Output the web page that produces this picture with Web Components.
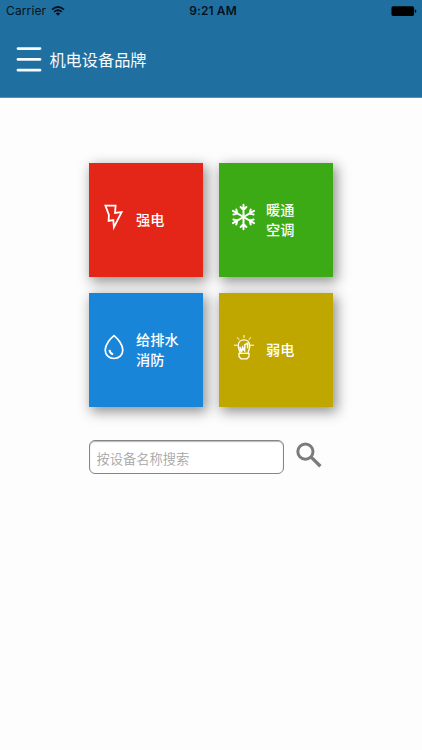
<!DOCTYPE html>
<html lang="zh-CN">
<head>
<meta charset="utf-8">
<title>机电设备品牌</title>
<style>
html,body{margin:0;height:100%;background:#fdfdfd}
body{font-family:Inter,"Noto Sans CJK SC",sans-serif;overflow:hidden}
</style>
</head>
<body>
<brand-page></brand-page>
<script>
const define = (name, html) => customElements.define(name, class extends HTMLElement {
  constructor() {
    super();
    this.attachShadow({ mode: 'open' }).innerHTML = html;
  }
});

// The six arms of the snowflake are one arm turned in steps of 60 degrees.
const flake = [0, 60, 120, 180, 240, 300].map(a =>
  `<path d="M12.5 13V.8M9.6 3l2.9 2.8L15.4 3" transform="rotate(${a} 12.5 13)"/>`).join('');

define('status-bar', `
<style>
:host{display:grid;grid-template-columns:1fr auto 1fr;align-items:center;height:22px;padding:0 5px 0 6px;color:#04121c;font-size:12px;line-height:22px}
.left{display:flex;align-items:center;gap:5px;letter-spacing:.13px}
.time{font-weight:600;font-size:11.9px;letter-spacing:.15px;padding-left:3px}
.battery{justify-self:end}
svg{display:block}
.wifi{margin-bottom:1px}
</style>
<div class="left"><span>Carrier</span>
<svg class="wifi" width="14" height="10" viewBox="0 0 14 10" fill="none" stroke="#04121c" stroke-width="1.7"><path d="M1 3.6Q7-1.6 13 3.6M3.1 5.9Q7 2.6 10.9 5.9"/><path d="M4.7 7.4Q7 5.6 9.3 7.4L7 9.8Z" fill="#04121c" stroke="none"/></svg></div>
<span class="time">9:21 AM</span>
<svg class="battery" width="26" height="11" viewBox="0 0 26 11"><rect x=".5" y=".3" width="22.6" height="9.6" rx="1.6" fill="#000"/><path d="M23.8 3.4h.4q1.2.5 1.2 1.7t-1.2 1.7h-.4z" fill="#000"/></svg>`);

define('app-header', `
<style>
:host{display:block;box-sizing:border-box;height:98px;background:#206fa1;border-bottom:1px solid #5590b5}
.bar{display:flex;align-items:center;gap:7.4px;height:74px;padding-left:16px;color:#f4fafd}
.title{display:block;font:400 16.2px/24px "Noto Sans CJK SC",sans-serif}
svg{display:block}
</style>
<status-bar></status-bar>
<div class="bar">
<svg width="26" height="28" viewBox="0 0 26 28" stroke="#f6fbff" stroke-width="2.8" stroke-linecap="round"><path d="M2 3.6h22M2 14.4h22M2 25.2h22"/></svg>
<slot class="title"></slot>
</div>`);

define('category-tile', `
<style>
:host{display:grid;grid-template-columns:26px 1fr;column-gap:9px;align-items:center;box-sizing:border-box;width:114px;height:114px;padding-left:12px;background:var(--tile);color:#fff;box-shadow:3px 4px 12px 1px rgba(0,0,0,.42)}
.label{display:block;font:500 14.2px/20px "Noto Sans CJK SC",sans-serif;white-space:pre-line;padding-bottom:2px}
.icon{display:block;padding-bottom:6px}
::slotted(svg){display:block;overflow:visible}
</style>
<slot class="icon" name="icon"></slot><slot class="label"></slot>`);

define('search-row', `
<style>
:host{display:flex;align-items:flex-start;gap:12px;margin-top:33px}
input{box-sizing:border-box;width:195px;height:34px;margin:0;padding:2px 7px 0 6.6px;border:1px solid #858585;border-radius:6px;background:#fff;box-shadow:inset 0 1px 1px rgba(0,0,0,.28);outline:0;font:350 13.25px/24px "Noto Sans CJK SC",sans-serif;color:#333}
input::placeholder{color:#a6a6a6;opacity:1}
button{display:block;border:0;padding:2px 0 0;margin:0;background:none}
svg{display:block}
</style>
<input placeholder="按设备名称搜索" aria-label="按设备名称搜索">
<button aria-label="搜索"><svg width="27" height="27" viewBox="0 0 27 27" fill="none" stroke="#7b7b7b"><circle cx="9.4" cy="9.6" r="7.6" stroke-width="3"/><path d="M14.6 14.6l9.8 9.6" stroke-width="3.4"/></svg></button>`);

define('brand-page', `
<style>
:host{display:block}
main{width:244px;margin:65px auto 0}
.tiles{display:grid;grid-template-columns:114px 114px;gap:16px}
svg{fill:none;stroke:#fff}
</style>
<app-header>机电设备品牌</app-header>
<main>
<div class="tiles">
<category-tile style="--tile:#e32618"><svg slot="icon" width="26" height="26" viewBox="0 0 26 26" stroke-width="1.8"><path d="M4.4 1.6H14.6L14 9L20.6 8.1L12.9 23.2L12.3 16L7.6 16.9L7.9 11Z"/></svg>强电</category-tile>
<category-tile style="--tile:#3caa15"><svg slot="icon" width="26" height="26" viewBox="0 0 26 26" stroke-width="2" stroke-linecap="round">${flake}</svg>暖通
空调</category-tile>
<category-tile style="--tile:#1985d8"><svg slot="icon" width="26" height="26" viewBox="0 0 26 26" stroke-width="1.7"><path d="M13 1.6C9.5 4.3 4.2 10.6 4.2 16C4.2 21.2 8 24.5 13 24.5S21.8 21.2 21.8 16C21.8 10.6 16.5 4.3 13 1.6Z"/><path d="M8.5 15.8Q9 19.6 12.2 20.4" stroke-width="2"/></svg>给排水
消防</category-tile>
<category-tile style="--tile:#bfa700"><svg slot="icon" width="26" height="26" viewBox="0 0 26 26" stroke="#fffde0" stroke-width="1.3"><path d="M13 1v3M6.2 3.3l2 2.5M19.8 3.3l-2 2.5M3 11.2h3.6M19.2 11.2H23" stroke-width="1"/><path d="M9.2 19C8.8 16.5 7.2 14.8 7.2 11.8C7.2 8.2 9.8 5.8 13 5.8S18.8 8.2 18.8 11.8C18.8 14.8 17.4 16.5 17 19"/><path d="M8.8 12.8l1.6 5.6 1.2-5.2 2 3.4 .3-6 3-1.6-.4 5.4M9.6 15.8h4" stroke-width="1.5"/><path d="M8 19.3H18V22.6L16 24.8H10L8 22.6Z"/></svg>弱电</category-tile>
</div>
<search-row></search-row>
</main>`);
</script>
</body>
</html>
